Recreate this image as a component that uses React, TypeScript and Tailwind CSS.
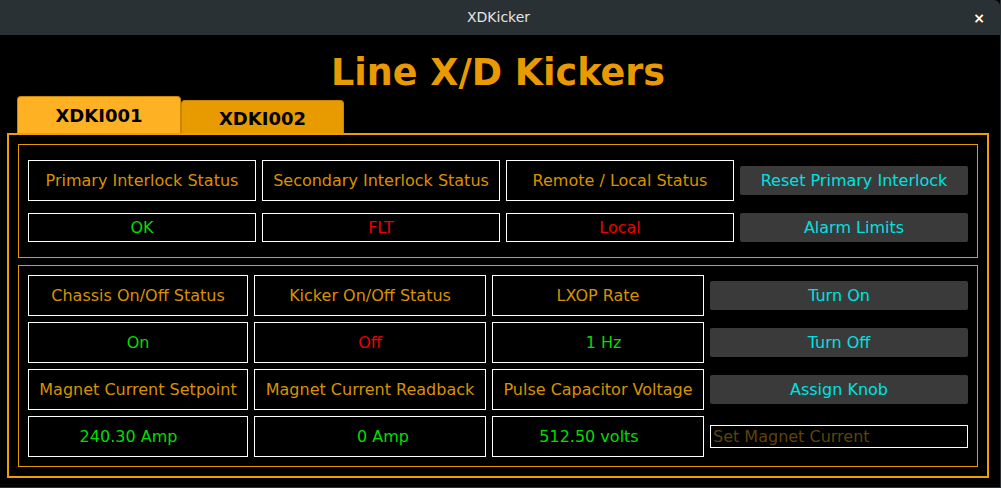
import React from "react";

const Box = ({ children, color, extra = "" }: { children: React.ReactNode; color: string; extra?: string }) => (
  <div className={`border border-white flex items-center justify-center text-[16px] ${color} ${extra}`}>{children}</div>
);

const Btn = ({ children }: { children: React.ReactNode }) => (
  <div className="self-center h-[29px] rounded-[2px] bg-[#3a3a3a] text-[#00e0e0] text-[16px] flex items-center justify-center">
    {children}
  </div>
);

const L = "text-[#d89200]";
const G = "text-[#00dd00]";
const R = "text-[#ee0000]";

export default function App() {
  return (
    <div className="w-[1001px] h-[488px] bg-black border-r border-b border-[#2a3134] flex flex-col font-['DejaVu_Sans',sans-serif] overflow-hidden">
      <div className="h-[35px] shrink-0 bg-[#2a3134] rounded-tr-[6px] flex items-center justify-center relative">
        <span className="text-[#e4e4e4] text-[14px] pr-[3px]">XDKicker</span>
        <span className="absolute right-[15px] top-[8px] text-white text-[14px] font-bold">×</span>
      </div>
      <div className="pl-[7px] flex flex-col">
        <div className="h-[61px] w-[982px] flex justify-center pt-[11px]">
          <span className="text-[#e89a00] text-[36.5px] font-bold leading-normal">Line X/D Kickers</span>
        </div>
        <div className="h-[37px] flex items-end pl-[10px]">
          <div className="w-[164px] h-[37px] bg-[#ffb124] border border-b-0 border-[#c98700] rounded-t-[4px] flex items-center justify-center text-black font-bold text-[18px] pt-[1px]">
            XDKI001
          </div>
          <div className="w-[163px] h-[33px] bg-[#e89b00] border border-b-0 border-[#c98700] rounded-t-[4px] flex items-center justify-center text-black font-bold text-[18px] pt-[2px]">
            XDKI002
          </div>
        </div>
        <div className="w-[982px] h-[345px] border-2 border-[#eea000] p-[9px] flex flex-col gap-[7px]">
          <div className="h-[114px] border border-[#e89a00] pt-[15px] pb-[15px] px-[9px]">
            <div className="grid grid-cols-[228px_238px_228px_228px] grid-rows-[41px_29px] gap-x-[6px] gap-y-[12px]">
              <Box color={L}>Primary Interlock Status</Box>
              <Box color={L}>Secondary Interlock Status</Box>
              <Box color={L}>Remote / Local Status</Box>
              <Btn>Reset Primary Interlock</Btn>
              <Box color={G}>OK</Box>
              <Box color={R}>FLT</Box>
              <Box color={R}>Local</Box>
              <Btn>Alarm Limits</Btn>
            </div>
          </div>
          <div className="h-[202px] border border-[#e89a00] py-[9px] px-[9px]">
            <div className="grid grid-cols-[220px_232px_212px_258px] auto-rows-[41px] gap-[6px]">
              <Box color={L}>Chassis On/Off Status</Box>
              <Box color={L}>Kicker On/Off Status</Box>
              <Box color={L}>LXOP Rate</Box>
              <Btn>Turn On</Btn>
              <Box color={G}>On</Box>
              <Box color={R}>Off</Box>
              <Box color={G} extra="pl-[11px]">1 Hz</Box>
              <Btn>Turn Off</Btn>
              <Box color={L}>Magnet Current Setpoint</Box>
              <Box color={L}>Magnet Current Readback</Box>
              <Box color={L}>Pulse Capacitor Voltage</Box>
              <Btn>Assign Knob</Btn>
              <Box color={G} extra="pr-[19px]">240.30 Amp</Box>
              <Box color={G} extra="pl-[26px]">0 Amp</Box>
              <Box color={G} extra="pr-[18px]">512.50 volts</Box>
              <input
                className="self-center h-[23px] bg-black border border-white px-[2px] text-[16px] text-[#d89200] placeholder:text-[#5e4308] outline-none"
                placeholder="Set Magnet Current"
              />
            </div>
          </div>
        </div>
      </div>
    </div>
  );
}
